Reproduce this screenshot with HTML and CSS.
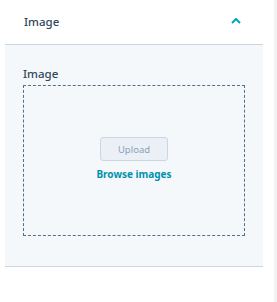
FILE: index.html
```html
<!DOCTYPE html>
<html lang="en">
<head>
    <meta charset="UTF-8" />
    <meta name="viewport" content="width=device-width, initial-scale=1.0" />
    <title>Image</title>
    <link rel="stylesheet" href="styles.css">
</head>
<body>
    <div class="sidebar">
        <div class="panel">
            <div class="panel-header">
                <span class="panel-title">Image</span>
                <svg class="chevron" width="10" height="6" viewBox="0 0 10 6">
                    <path d="M1 5 L5 1 L9 5" fill="none" stroke="#00a4bd" stroke-width="2" />
                </svg>
            </div>
            <div class="panel-body">
                <label class="field-label">Image</label>
                <div class="dropzone">
                    <button class="upload" disabled>Upload</button>
                    <a class="browse" href="#">Browse images</a>
                </div>
            </div>
        </div>
        <div class="scroll-track"></div>
    </div>
</body>
</html>
```

FILE: styles.css
```css
body {
    margin: 0;
    font-family: "Noto Sans", Arial, sans-serif;
    color: #33475b;
    background: #ffffff;
}

.sidebar {
    display: flex;
    height: 302px;
}

.panel {
    width: 258px;
    margin-left: 5px;
    align-self: flex-start;
    border-bottom: 1px solid #cbd6e2;
}

.panel-header {
    display: flex;
    justify-content: space-between;
    align-items: center;
    height: 45px;
    padding: 0 22px 0 19px;
    border-bottom: 1px solid #cbd6e2;
    box-sizing: border-box;
}

.panel-title {
    font-size: 11.5px;
    font-weight: 500;
    padding-bottom: 1px;
}

.chevron {
    margin-top: -2px;
}

.panel-body {
    background: #f5f8fa;
    padding: 21px 18px 30px 18px;
}

.field-label {
    display: block;
    font-size: 11.5px;
    font-weight: 500;
    margin-bottom: 4px;
}

.dropzone {
    box-sizing: border-box;
    height: 151px;
    padding-bottom: 3px;
    border: 1px dashed #516f90;
    display: flex;
    flex-direction: column;
    align-items: center;
    justify-content: center;
    gap: 6px;
}

.upload {
    width: 68px;
    height: 24px;
    font-family: inherit;
    font-size: 9.5px;
    color: #8aa1b9;
    background: #eaf0f6;
    border: 1px solid #cbd6e2;
    border-radius: 3px;
}

.browse {
    font-size: 10px;
    font-weight: 700;
    color: #0091ae;
    text-decoration: none;
}

.scroll-track {
    margin-left: auto;
    width: 3px;
    background: #f2f2f2;
}
```
